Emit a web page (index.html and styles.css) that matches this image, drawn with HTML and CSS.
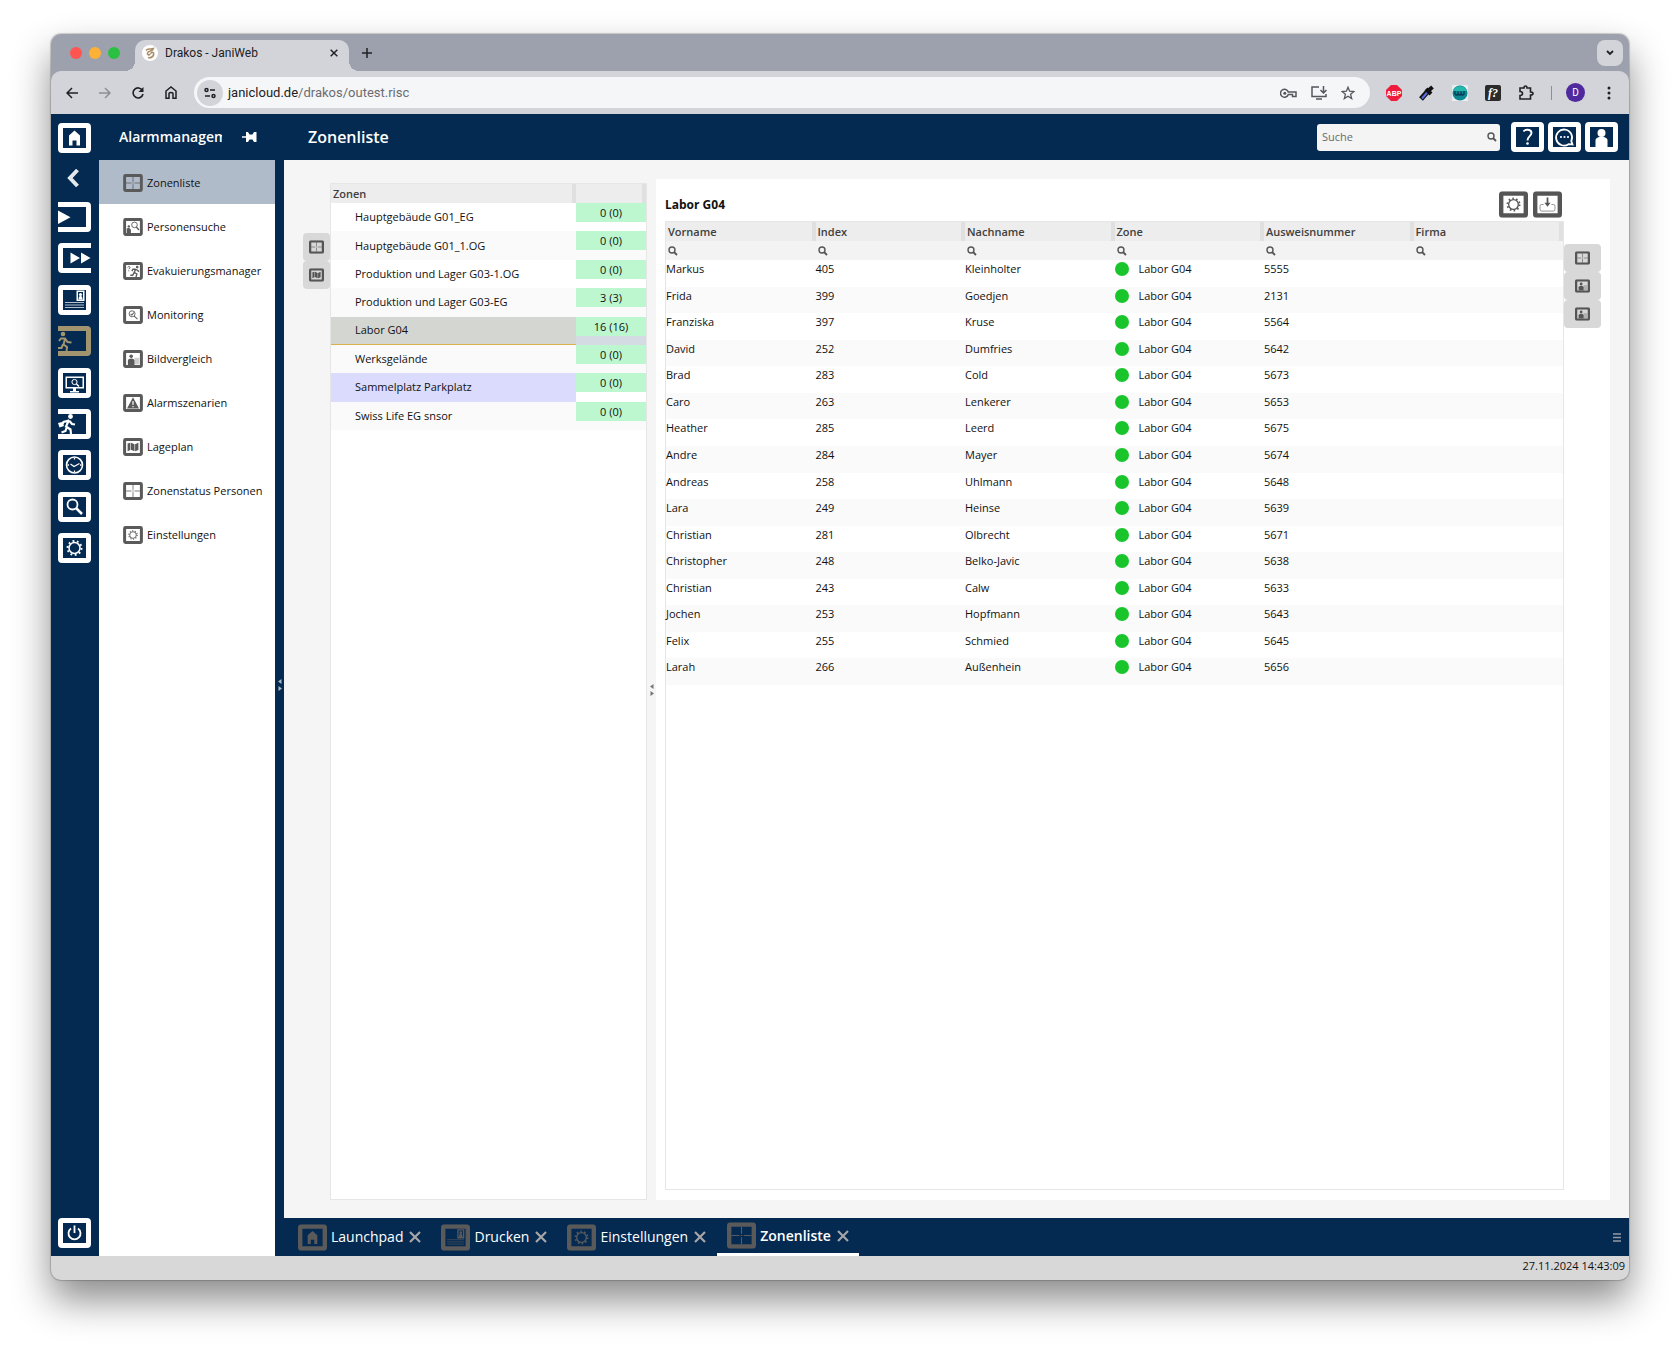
FILE: index.html
```html
<!DOCTYPE html>
<html lang="de">
<head>
<meta charset="utf-8">
<title>Drakos - JaniWeb</title>
<link rel="stylesheet" href="styles.css">
</head>
<body>
<svg class="sprite" aria-hidden="true">
  <symbol id="frame" viewBox="0 0 33 30"><path fill-rule="evenodd" d="M4 0H29a4 4 0 0 1 4 4V26a4 4 0 0 1-4 4H4a4 4 0 0 1-4-4V4a4 4 0 0 1 4-4ZM5 5V25H28V5Z"/></symbol>
  <symbol id="frame-right" viewBox="0 0 33 30"><path d="M0 0H29a4 4 0 0 1 4 4V26a4 4 0 0 1-4 4H0V25H28V5H0Z"/></symbol>
  <symbol id="home" viewBox="0 0 33 30"><use href="#frame"/><path d="M16.500 7.500 22 12.500V22.500H18.500V17.500H14.500V22.500H11V12.500Z"/></symbol>
  <symbol id="play" viewBox="0 0 33 30"><use href="#frame-right"/><path d="M0 8.500 12.500 15.200 0 22Z"/></symbol>
  <symbol id="forward" viewBox="0 0 33 30"><path d="M33 0H4a4 4 0 0 0-4 4V26a4 4 0 0 0 4 4H33V25H5V5H33Z"/><path d="M12.500 9.500 22 15 12.500 20.500ZM23 9.500 32.500 15 23 20.500Z"/></symbol>
  <symbol id="badge" viewBox="0 0 33 30"><use href="#frame"/><path fill-rule="evenodd" d="M18.500 5.500H26.500V16H18.500ZM20 7V14.500H25V7Z"/><circle cx="22.500" cy="9.500" r="1.600"/><path d="M20.500 14.500c0-5 4-5 4 0Z"/><path d="M7 17.500H26M7 20H26M7 22.500H26" stroke="currentColor" stroke-width="1" opacity=".7"/></symbol>
  <symbol id="escape" viewBox="0 0 33 30"><use href="#frame-right"/><circle cx="5" cy="8" r="2.300"/><path d="M1 15 3 12.500H7L9.500 16 13.500 16.500M7 13 5.500 18.500 9 21 8.500 25.500M5 18.500 3.500 22H0" fill="none" stroke="currentColor" stroke-width="2"/></symbol>
  <symbol id="monitor" viewBox="0 0 33 30"><use href="#frame"/><path fill-rule="evenodd" d="M7.500 8.500H26V20.500H7.500ZM9 10V19H24.500V10ZM15 20.500H18V23H21V24.500H12V23H15Z"/><circle cx="16.500" cy="14" r="2.600" fill="none" stroke="currentColor"/><path d="M18.500 16 21 18.500" stroke="currentColor" stroke-width="1.500"/></symbol>
  <symbol id="runner" viewBox="0 0 33 30"><use href="#frame-right"/><circle cx="12.500" cy="7.500" r="2.400"/><path d="M11 11 8 17.500 12.500 20.500 13 25M9 17.500 7.500 22 3.500 23.500M11 11.500 5.500 13 4 16M11.500 12 14 15 17 15.500" fill="none" stroke="currentColor" stroke-width="2.200"/><path d="M0 14 4 13 6 17 1.500 18.500Z"/></symbol>
  <symbol id="clock" viewBox="0 0 33 30"><use href="#frame"/><circle cx="16.500" cy="15" r="8" fill="none" stroke="currentColor" stroke-width="1.600"/><path d="M12.500 14 16 16.500 21.500 13.500M16.500 8V9.500M16.500 20.500V22M9.500 15H11M22 15H23.500" fill="none" stroke="currentColor" stroke-width="1.300"/></symbol>
  <symbol id="search" viewBox="0 0 33 30"><use href="#frame"/><circle cx="14.500" cy="12.500" r="5" fill="none" stroke="currentColor" stroke-width="1.800"/><path d="M18 16 24 22" stroke="currentColor" stroke-width="2.500"/></symbol>
  <symbol id="gear" viewBox="0 0 33 30"><use href="#frame"/><circle cx="16.500" cy="15" r="5.500" fill="none" stroke="currentColor" stroke-width="1.500"/><circle cx="16.500" cy="15" r="7" fill="none" stroke="currentColor" stroke-width="1.900" stroke-dasharray="1.800 2.598"/></symbol>
  <symbol id="power" viewBox="0 0 33 30"><use href="#frame"/><path d="M13 10.500A6 6 0 1 0 20 10.500M16.500 7.500V15" fill="none" stroke="currentColor" stroke-width="1.800"/></symbol>
  <symbol id="help" viewBox="0 0 33 30"><use href="#frame"/><path d="M12.500 9.500C14 7 20.500 7 20.500 11 20.500 14 16.500 14.500 16.500 18.500" fill="none" stroke="currentColor" stroke-width="1.900"/><circle cx="16.500" cy="21.500" r="1.300"/></symbol>
  <symbol id="chat" viewBox="0 0 33 30"><use href="#frame"/><path d="M20.500 22.200A8 8 0 1 1 23.300 19L24.500 22.500Z" fill="none" stroke="currentColor" stroke-width="1.800"/><circle cx="13" cy="15" r="1.100"/><circle cx="16.500" cy="15" r="1.100"/><circle cx="20" cy="15" r="1.100"/></symbol>
  <symbol id="user" viewBox="0 0 33 30"><use href="#frame"/><circle cx="16.500" cy="11" r="4"/><path d="M10.500 25V18.500C10.500 13.500 22.500 13.500 22.500 18.500V25Z"/></symbol>
  <symbol id="grid" viewBox="0 0 33 30"><use href="#frame"/><path d="M16.500 5V13M16.500 17V25M5 15H14M19 15H28M15.500 15H17.500" stroke="currentColor" stroke-width="1.300"/></symbol>
  <symbol id="person-search" viewBox="0 0 33 30"><use href="#frame"/><circle cx="19" cy="11.500" r="4.700" fill="none" stroke="currentColor" stroke-width="1.500"/><path d="M22 15 26.500 20" stroke="currentColor" stroke-width="2"/><circle cx="9.500" cy="14" r="2"/><path d="M6 25V18C7 16 12 16 13 20V25Z"/></symbol>
  <symbol id="evacuate" viewBox="0 0 33 30"><use href="#frame"/><circle cx="23.500" cy="8.500" r="2.200"/><path d="M7.500 9C8.500 6.500 12 7.500 11.500 9.500L9.500 12M9.500 14V15.500" fill="none" stroke="currentColor" stroke-width="1.600"/><path d="M21.500 11.500 18.500 17 23 20 21.500 25M18.500 17.500 16 22H12M21 12H16.500L14.500 15M22 12.500 26.500 16" fill="none" stroke="currentColor" stroke-width="2.300"/></symbol>
  <symbol id="monitoring" viewBox="0 0 33 30"><use href="#frame"/><circle cx="15" cy="13" r="5" fill="none" stroke="currentColor" stroke-width="1.500"/><path d="M18.500 17 24 22M12.500 13 14.500 15 18 11" fill="none" stroke="currentColor" stroke-width="1.700"/></symbol>
  <symbol id="compare" viewBox="0 0 33 30"><use href="#frame"/><circle cx="13.500" cy="10.500" r="3"/><path d="M8 25V18C8 13 19 13 19 18V25Z"/><path d="M19 13H27V24H19Z" opacity=".3"/></symbol>
  <symbol id="alarm" viewBox="0 0 33 30"><use href="#frame"/><path fill-rule="evenodd" d="M16.500 5.500 26.500 24H6.500ZM15.300 12 15.700 18.500H17.300L17.700 12ZM15.500 20V22H17.500V20Z"/></symbol>
  <symbol id="map" viewBox="0 0 33 30"><use href="#frame"/><path d="M7.500 9 12 8V20L7.500 22ZM13 8 19 10.500V22L13 19.500ZM20 10.500 25.500 8V20L20 22Z"/></symbol>
  <symbol id="download" viewBox="0 0 33 30"><use href="#frame"/><path d="M12 15H9.500Q8 15 8 17V20.500Q8 22.500 10 22.500H23Q25 22.500 25 20.500V17Q25 15 23.500 15H21" fill="none" stroke="currentColor" opacity=".7"/><path d="M15.500 7H17.500V13H20L16.500 17.500 13 13H15.500Z"/></symbol>
  <symbol id="lens" viewBox="0 0 10 10"><circle cx="4" cy="4" r="3" fill="none" stroke="currentColor" stroke-width="1.400"/><path d="M6 6 9 9" stroke="currentColor" stroke-width="1.800"/></symbol>
  <symbol id="cross" viewBox="0 0 12 12"><path d="M1 1 11 11M11 1 1 11" stroke="currentColor" stroke-width="2.200"/></symbol>
  <symbol id="split" viewBox="0 0 4 12"><path d="M3.500 0V5L0 2.500ZM.500 7V12L4 9.500Z"/></symbol>
</svg>

<div class="window">
  <div class="tabstrip">
    <div class="lights"><span class="light red"></span><span class="light amber"></span><span class="light green"></span></div>
    <div class="browser-tab">
      <svg class="favicon" viewBox="0 0 16 16"><circle cx="8" cy="8" r="8" fill="#fff"/><path d="M4 5.500C6 2.500 8 5 11.500 3.500 11 7 6.500 5 5.500 8 5 10 7 10.500 8 9M6 12.500C9 13.500 12.500 11 11.500 8 10.500 6.500 8.500 7.500 9 9" fill="none" stroke="#a98e68" stroke-width="1.600"/></svg>
      <span class="tab-name">Drakos - JaniWeb</span>
      <button class="plain" aria-label="Tab schließen"><svg width="8" height="8" viewBox="0 0 12 12"><use href="#cross"/></svg></button>
    </div>
    <button class="plain new-tab" aria-label="Neuer Tab"><svg width="10" height="10" viewBox="0 0 10 10"><path d="M5 0V10M0 5H10" stroke="currentColor" stroke-width="1.500"/></svg></button>
    <button class="plain tab-menu" aria-label="Tabs suchen"><svg width="8" height="6" viewBox="0 0 8 6"><path d="M1 1 4 4 7 1" fill="none" stroke="currentColor" stroke-width="1.800"/></svg></button>
  </div>

  <div class="toolbar">
    <button class="plain nav" aria-label="Zurück"><svg width="12" height="12" viewBox="0 0 12 12"><path d="M12 6H1M6 1 1 6 6 11" fill="none" stroke="currentColor" stroke-width="1.500"/></svg></button>
    <button class="plain nav dim" aria-label="Vorwärts"><svg width="12" height="12" viewBox="0 0 12 12"><path d="M0 6H11M6 1 11 6 6 11" fill="none" stroke="currentColor" stroke-width="1.500"/></svg></button>
    <button class="plain nav" aria-label="Neu laden"><svg width="12" height="12" viewBox="0 0 12 12"><path d="M10.500 3.500A5 5 0 1 0 11 7" fill="none" stroke="currentColor" stroke-width="1.600"/><path d="M11.500 0V5H6.500Z"/></svg></button>
    <button class="plain nav" aria-label="Startseite"><svg width="12" height="13" viewBox="0 0 12 13"><path d="M1 12.200V5L6 1 11 5V12.200H8V8Q8 6.500 6 6.500T4 8V12.200Z" fill="none" stroke="currentColor" stroke-width="1.500"/></svg></button>
    <div class="omnibox">
      <button class="plain site-info" aria-label="Website-Informationen"><svg width="12" height="12" viewBox="0 0 12 12"><g fill="none" stroke="currentColor" stroke-width="1.500"><circle cx="2.500" cy="3" r="1.500"/><path d="M6 3H11M1 9H6"/><circle cx="9.500" cy="9" r="1.500"/></g></svg></button>
      <span class="url">janicloud.de<span class="path">/drakos/outest.risc</span></span>
      <svg width="17" height="10" viewBox="0 0 17 10"><g fill="none" stroke="currentColor" stroke-width="1.500"><path d="M8.300 4H16V8.500H12.500V6.500H8.300A4 4 0 1 1 8.300 4Z"/></g><circle cx="4.800" cy="5.200" r="1.500"/></svg>
      <svg width="16" height="14" viewBox="0 0 16 14"><path d="M8 1H1V10.500H15V8M5 13H11M12.500 0V6.500M9.500 4 12.500 7 15.500 4" fill="none" stroke="currentColor" stroke-width="1.500"/></svg>
      <svg width="14" height="14" viewBox="0 0 14 14"><path d="M7 1.200 8.600 5.200 13 5.500 9.600 8.300 10.700 12.600 7 10.200 3.300 12.600 4.400 8.300 1 5.500 5.400 5.200Z" fill="none" stroke="currentColor" stroke-width="1.300"/></svg>
    </div>
    <div class="extensions">
      <svg width="16" height="16" viewBox="0 0 16 16"><path d="M5 0H11L16 5V11L11 16H5L0 11V5Z" fill="#ee1c3c"/><text x="8" y="10.500" class="abp">ABP</text></svg>
      <svg width="16" height="16" viewBox="0 0 16 16"><path d="M2 14 9 6" stroke="#111" stroke-width="5"/><path d="M3 13.500 9 6.500" stroke="#5a6ee0" stroke-width="2"/><path d="M7 4 12 9M9 6 13.500 2" stroke="#111" stroke-width="4"/></svg>
      <svg width="16" height="16" viewBox="0 0 16 16"><path d="M0 0H16V16H0Z" fill="#e8ecee"/><circle cx="8" cy="8" r="7.500" fill="#0c8690"/><path d="M1 6A7.500 7.500 0 0 1 15 6Z" fill="#25b8ad"/><path d="M3 6V9Q4.500 11 6 9V6.500M6 9Q7.500 11 9 9V6.500M9 9Q10.500 11 12 9V6" fill="none" stroke="#083a55" stroke-width="1.300"/></svg>
      <svg width="16" height="16" viewBox="0 0 16 16"><rect width="16" height="16" rx="2" fill="#2b2b2b"/><text x="8" y="12" class="fq">f?</text></svg>
      <svg width="16" height="16" viewBox="0 0 16 16"><path d="M2 3H6Q6 1 7.500 1T9 3H12.500V7Q15 7 15 8.500T12.500 10V14H2V10.500Q4.500 10.500 4.500 8.500T2 6.500Z" fill="none" stroke="#222" stroke-width="1.600"/></svg>
    </div>
    <span class="divider"></span>
    <button class="plain avatar" aria-label="Profil">D</button>
    <button class="plain more" aria-label="Menü"><svg width="4" height="14" viewBox="0 0 4 14"><circle cx="2" cy="2" r="1.500"/><circle cx="2" cy="7" r="1.500"/><circle cx="2" cy="12" r="1.500"/></svg></button>
  </div>

  <div class="app">
    <nav class="rail" aria-label="Module">
      <button class="plain" aria-label="Start"><svg class="icon"><use href="#home"/></svg></button>
      <button class="plain back" aria-label="Zurück"><svg width="12" height="20" viewBox="0 0 12 20"><path d="M10.500 2 3 10 10.500 18" fill="none" stroke="currentColor" stroke-width="4"/></svg></button>
      <div class="modules">
        <button class="plain" aria-label="Eingang"><svg class="icon"><use href="#play"/></svg></button>
        <button class="plain" aria-label="Durchgang"><svg class="icon"><use href="#forward"/></svg></button>
        <button class="plain" aria-label="Ausweise"><svg class="icon"><use href="#badge"/></svg></button>
        <button class="plain current" aria-label="Alarmmanagement"><svg class="icon"><use href="#escape"/></svg></button>
        <button class="plain" aria-label="Überwachung"><svg class="icon"><use href="#monitor"/></svg></button>
        <button class="plain" aria-label="Besucher"><svg class="icon"><use href="#runner"/></svg></button>
        <button class="plain" aria-label="Zeiten"><svg class="icon"><use href="#clock"/></svg></button>
        <button class="plain" aria-label="Suche"><svg class="icon"><use href="#search"/></svg></button>
        <button class="plain" aria-label="Einstellungen"><svg class="icon"><use href="#gear"/></svg></button>
      </div>
      <button class="plain power" aria-label="Abmelden"><svg class="icon"><use href="#power"/></svg></button>
    </nav>

    <aside class="sidebar">
      <div class="sidebar-head"><h2>Alarmmanagement</h2><button class="plain" aria-label="Anheften"><svg width="15" height="12" viewBox="0 0 15 12"><path d="M0 5.200H4V1H6L7.500 3.500H10.500L12 1H14.500V11H12L10.500 8.500H7.500L6 11H4V6.800H0Z"/></svg></button></div>
      <nav class="menu" aria-label="Alarmmanagement">
        <a href="#" class="active"><svg class="icon-s"><use href="#grid"/></svg>Zonenliste</a>
        <a href="#"><svg class="icon-s"><use href="#person-search"/></svg>Personensuche</a>
        <a href="#"><svg class="icon-s"><use href="#evacuate"/></svg>Evakuierungsmanager</a>
        <a href="#"><svg class="icon-s"><use href="#monitoring"/></svg>Monitoring</a>
        <a href="#"><svg class="icon-s"><use href="#compare"/></svg>Bildvergleich</a>
        <a href="#"><svg class="icon-s"><use href="#alarm"/></svg>Alarmszenarien</a>
        <a href="#"><svg class="icon-s"><use href="#map"/></svg>Lageplan</a>
        <a href="#"><svg class="icon-s"><use href="#grid"/></svg>Zonenstatus Personen</a>
        <a href="#"><svg class="icon-s"><use href="#gear"/></svg>Einstellungen</a>
      </nav>
    </aside>
    <div class="split dark"><svg width="4" height="12"><use href="#split"/></svg></div>

    <div class="main">
      <header class="header">
        <h1>Zonenliste</h1>
        <label class="search"><input type="text" placeholder="Suche" aria-label="Suche"><svg width="10" height="10"><use href="#lens"/></svg></label>
        <button class="plain" aria-label="Hilfe"><svg class="icon"><use href="#help"/></svg></button>
        <button class="plain" aria-label="Nachrichten"><svg class="icon"><use href="#chat"/></svg></button>
        <button class="plain" aria-label="Benutzer"><svg class="icon"><use href="#user"/></svg></button>
      </header>

      <div class="workspace">
        <div class="side-tabs left">
          <button class="plain" aria-label="Zonen"><svg class="icon-xs"><use href="#grid"/></svg></button>
          <button class="plain" aria-label="Lageplan"><svg class="icon-xs"><use href="#map"/></svg></button>
        </div>
        <section class="zones">
          <table class="zone-table">
            <thead><tr><th>Zonen</th><th class="count-col"></th></tr></thead>
            <tbody>
              <tr><td>Hauptgebäude G01_EG</td><td><div class="count">0 (0)</div></td></tr>
              <tr><td>Hauptgebäude G01_1.OG</td><td><div class="count">0 (0)</div></td></tr>
              <tr><td>Produktion und Lager G03-1.OG</td><td><div class="count">0 (0)</div></td></tr>
              <tr><td>Produktion und Lager G03-EG</td><td><div class="count">3 (3)</div></td></tr>
              <tr class="selected"><td>Labor G04</td><td><div class="count">16 (16)</div></td></tr>
              <tr><td>Werksgelände</td><td><div class="count">0 (0)</div></td></tr>
              <tr class="assembly"><td>Sammelplatz Parkplatz</td><td><div class="count">0 (0)</div></td></tr>
              <tr><td>Swiss Life EG snsor</td><td><div class="count">0 (0)</div></td></tr>
            </tbody>
          </table>
        </section>
        <div class="split"><svg width="4" height="12"><use href="#split"/></svg></div>

        <section class="detail">
          <div class="detail-main">
            <div class="detail-head">
              <h3>Labor G04</h3>
              <button class="plain" aria-label="Einstellungen"><svg class="icon-m"><use href="#gear"/></svg></button>
              <button class="plain" aria-label="Exportieren"><svg class="icon-m"><use href="#download"/></svg></button>
            </div>
            <div class="grid-box">
              <table class="person-table">
                <thead>
                  <tr class="names"><th>Vorname</th><th>Index</th><th>Nachname</th><th>Zone</th><th>Ausweisnummer</th><th>Firma</th></tr>
                  <tr class="filters">
                    <td><button class="plain" aria-label="Vorname filtern"><svg width="10" height="10"><use href="#lens"/></svg></button></td>
                    <td><button class="plain" aria-label="Index filtern"><svg width="10" height="10"><use href="#lens"/></svg></button></td>
                    <td><button class="plain" aria-label="Nachname filtern"><svg width="10" height="10"><use href="#lens"/></svg></button></td>
                    <td><button class="plain" aria-label="Zone filtern"><svg width="10" height="10"><use href="#lens"/></svg></button></td>
                    <td><button class="plain" aria-label="Ausweisnummer filtern"><svg width="10" height="10"><use href="#lens"/></svg></button></td>
                    <td><button class="plain" aria-label="Firma filtern"><svg width="10" height="10"><use href="#lens"/></svg></button></td>
                  </tr>
                </thead>
                <tbody>
                  <tr><td>Markus</td><td>405</td><td>Kleinholter</td><td><span class="dot"></span>Labor G04</td><td>5555</td><td></td></tr>
                  <tr><td>Frida</td><td>399</td><td>Goedjen</td><td><span class="dot"></span>Labor G04</td><td>2131</td><td></td></tr>
                  <tr><td>Franziska</td><td>397</td><td>Kruse</td><td><span class="dot"></span>Labor G04</td><td>5564</td><td></td></tr>
                  <tr><td>David</td><td>252</td><td>Dumfries</td><td><span class="dot"></span>Labor G04</td><td>5642</td><td></td></tr>
                  <tr><td>Brad</td><td>283</td><td>Cold</td><td><span class="dot"></span>Labor G04</td><td>5673</td><td></td></tr>
                  <tr><td>Caro</td><td>263</td><td>Lenkerer</td><td><span class="dot"></span>Labor G04</td><td>5653</td><td></td></tr>
                  <tr><td>Heather</td><td>285</td><td>Leerd</td><td><span class="dot"></span>Labor G04</td><td>5675</td><td></td></tr>
                  <tr><td>Andre</td><td>284</td><td>Mayer</td><td><span class="dot"></span>Labor G04</td><td>5674</td><td></td></tr>
                  <tr><td>Andreas</td><td>258</td><td>Uhlmann</td><td><span class="dot"></span>Labor G04</td><td>5648</td><td></td></tr>
                  <tr><td>Lara</td><td>249</td><td>Heinse</td><td><span class="dot"></span>Labor G04</td><td>5639</td><td></td></tr>
                  <tr><td>Christian</td><td>281</td><td>Olbrecht</td><td><span class="dot"></span>Labor G04</td><td>5671</td><td></td></tr>
                  <tr><td>Christopher</td><td>248</td><td>Belko-Javic</td><td><span class="dot"></span>Labor G04</td><td>5638</td><td></td></tr>
                  <tr><td>Christian</td><td>243</td><td>Calw</td><td><span class="dot"></span>Labor G04</td><td>5633</td><td></td></tr>
                  <tr><td>Jochen</td><td>253</td><td>Hopfmann</td><td><span class="dot"></span>Labor G04</td><td>5643</td><td></td></tr>
                  <tr><td>Felix</td><td>255</td><td>Schmied</td><td><span class="dot"></span>Labor G04</td><td>5645</td><td></td></tr>
                  <tr><td>Larah</td><td>266</td><td>Außenhein</td><td><span class="dot"></span>Labor G04</td><td>5656</td><td></td></tr>
                </tbody>
              </table>
            </div>
          </div>
          <div class="side-tabs right">
            <button class="plain" aria-label="Zonenstatus"><svg class="icon-xs"><use href="#grid"/></svg></button>
            <button class="plain" aria-label="Bildvergleich"><svg class="icon-xs"><use href="#compare"/></svg></button>
            <button class="plain" aria-label="Personenbild"><svg class="icon-xs"><use href="#compare"/></svg></button>
          </div>
        </section>
      </div>

      <div class="taskbar">
        <div class="task"><svg class="icon-m"><use href="#home"/></svg><a href="#">Launchpad</a><button class="plain" aria-label="Launchpad schließen"><svg width="12" height="12"><use href="#cross"/></svg></button></div>
        <div class="task"><svg class="icon-m"><use href="#badge"/></svg><a href="#">Drucken</a><button class="plain" aria-label="Drucken schließen"><svg width="12" height="12"><use href="#cross"/></svg></button></div>
        <div class="task"><svg class="icon-m"><use href="#gear"/></svg><a href="#">Einstellungen</a><button class="plain" aria-label="Einstellungen schließen"><svg width="12" height="12"><use href="#cross"/></svg></button></div>
        <div class="task active"><svg class="icon-m"><use href="#grid"/></svg><a href="#">Zonenliste</a><button class="plain" aria-label="Zonenliste schließen"><svg width="12" height="12"><use href="#cross"/></svg></button></div>
        <button class="plain task-menu" aria-label="Alle Fenster"><svg width="8" height="9" viewBox="0 0 8 9"><path d="M0 1H8M0 4.500H8M0 8H8" stroke="currentColor" stroke-width="1.500"/></svg></button>
      </div>
    </div>
  </div>
  <footer class="status">27.11.2024 14:43:09</footer>
</div>
</body>
</html>
```
FILE: styles.css
```css
* { box-sizing: border-box; }

body {
  margin: 0;
  min-height: 100vh;
  padding: 34px 51px 68px;
  display: flex;
  background: #fff;
  font: 11px/20px "Open Sans", sans-serif;
  color: #111;
}

h1, h2, h3 { margin: 0; font-weight: 600; }
a { color: inherit; text-decoration: none; }
svg { display: block; fill: currentColor; flex: none; }
.sprite { position: absolute; width: 0; height: 0; }

.plain {
  padding: 0;
  border: 0;
  background: none;
  color: inherit;
  font: inherit;
  display: flex;
  align-items: center;
  justify-content: center;
  flex: none;
}

.icon { width: 33px; height: 30px; }
.icon-m { width: 29px; height: 27px; }
.icon-s { width: 20px; height: 18px; }
.icon-xs { width: 15px; height: 14px; }

.window {
  flex: 1;
  min-width: 0;
  display: flex;
  flex-direction: column;
  border-radius: 10px;
  overflow: hidden;
  background: #9da1ad;
  box-shadow: 0 0 1px 1px rgba(0, 0, 0, .18), 0 20px 38px rgba(0, 0, 0, .46);
}

/* Browser frame */
.tabstrip {
  height: 37px;
  display: flex;
  align-items: center;
  padding: 0 6px 0 19px;
  color: #202124;
}
.lights { display: flex; gap: 7px; width: 65px; }
.light { width: 12px; height: 12px; border-radius: 50%; }
.red { background: #fe5550; }
.amber { background: #fdb235; }
.green { background: #2ac142; }
.browser-tab {
  position: relative;
  align-self: flex-end;
  width: 214px;
  height: 31px;
  padding: 0 11px 6px 7px;
  display: flex;
  align-items: center;
  gap: 7px;
  border-radius: 10px 10px 0 0;
  background: #d3d4da;
}
.browser-tab::before, .browser-tab::after {
  content: "";
  position: absolute;
  bottom: 0;
  width: 10px;
  height: 10px;
}
.browser-tab::before { left: -10px; background: radial-gradient(circle at 0 0, transparent 10px, #d3d4da 10px); }
.browser-tab::after { right: -10px; background: radial-gradient(circle at 100% 0, transparent 10px, #d3d4da 10px); }
.favicon { width: 16px; height: 16px; }
.tab-name { flex: 1; font: 12px/16px Roboto, sans-serif; }
.new-tab { margin-left: 13px; }
.tab-menu { margin-left: auto; width: 26px; height: 26px; border-radius: 8px; background: #d3d4da; }

.toolbar {
  height: 43px;
  padding: 0 14px 0 15px;
  display: flex;
  align-items: center;
  border-radius: 10px 10px 0 0;
  background: #d3d4da;
  color: #202124;
}
.nav { width: 12px; margin-right: 21px; }
.dim { color: #8d8f95; }
.omnibox {
  flex: 1;
  height: 31px;
  display: flex;
  align-items: center;
  gap: 14px;
  padding: 0 15px 0 3px;
  border-radius: 16px;
  background: #f5f6f8;
  color: #55575c;
  margin-left: -4px;
}
.site-info { width: 26px; height: 26px; border-radius: 50%; background: #d3d4da; color: #202124; }
.url { flex: 1; margin-left: -9px; font: 13px/20px Roboto, sans-serif; color: #202124; }
.path { color: #6a6c70; }
.extensions { display: flex; gap: 17px; margin-left: 16px; }
.abp { font: 700 7px "Liberation Sans", sans-serif; fill: #fff; text-anchor: middle; }
.fq { font: italic 700 12px "Liberation Serif", serif; fill: #fff; text-anchor: middle; }
.divider { width: 1px; height: 14px; margin: 0 14px 0 17px; background: #8b8e9c; }
.avatar { width: 19px; height: 19px; border-radius: 50%; background: #4e2a9e; color: #fff; font: 10px/19px Roboto, sans-serif; }
.more { margin: 0 4px 0 22px; }

/* Application */
.app { flex: 1; display: flex; background: #042a52; }

.rail {
  width: 48px;
  display: flex;
  flex-direction: column;
  align-items: center;
  padding: 9px 1px 8px 0;
  color: #fff;
}
.back { width: 33px; height: 49px; padding-right: 3px; color: #e4e7ec; }
.modules { height: 361px; display: flex; flex-direction: column; justify-content: space-between; }
.current { color: #a39470; }
.power { margin-top: auto; }

.sidebar { width: 176px; display: flex; flex-direction: column; background: #fff; }
.sidebar-head {
  height: 46px;
  padding: 0 18px 0 20px;
  display: flex;
  align-items: center;
  justify-content: space-between;
  background: #042a52;
  color: #fff;
}
.sidebar-head h2 { width: 103px; overflow: hidden; font-size: 14px; }
.menu a {
  height: 44px;
  padding: 2px 0 0 24px;
  display: flex;
  align-items: center;
  gap: 4px;
  white-space: nowrap;
}
.menu svg { color: #5a5a5a; }
.menu .active { background: #b0bbc9; }

.split { width: 9px; display: flex; align-items: center; justify-content: center; color: #777; }
.dark { color: #aeb6c0; }

.main { flex: 1; min-width: 0; display: flex; flex-direction: column; }
.header {
  height: 46px;
  padding: 0 11px 0 24px;
  display: flex;
  align-items: center;
  gap: 4px;
  color: #fff;
}
.header h1 { flex: 1; font-size: 16px; }
.search {
  width: 183px;
  height: 27px;
  margin-right: 7px;
  padding: 0 3px 0 5px;
  display: flex;
  align-items: center;
  border-radius: 3px;
  background: #f4f4f4;
  color: #555;
}
.search input { flex: 1; min-width: 0; padding: 0; border: 0; background: none; outline: 0; font: inherit; }
.search input::placeholder { color: #6a6a6a; }

.workspace { flex: 1; display: flex; padding: 19px 19px 18px; background: #f5f5f5; }

.side-tabs { color: #555; }
.side-tabs .plain { width: 100%; height: 28px; border-radius: 4px; background: #d8d8d8; }
.left { width: 27px; padding-top: 54px; }
.right { width: 37px; padding-top: 65px; }

.zones { width: 317px; margin-top: 4px; border: 1px solid #e6e6e6; background: #fff; }
table { width: 100%; border-collapse: separate; border-spacing: 0; table-layout: fixed; }
th, td { padding: 0; text-align: left; white-space: nowrap; }
th {
  height: 19px;
  padding-left: 2px;
  line-height: 19px;
  font-weight: 600;
  color: #404040;
  background: #ededed;
  border-right: 4px solid #e0e0e0;
}
tbody tr:nth-child(even) { background: #fafafa; }

.zone-table { height: 246px; }
.zone-table .count-col { width: 70px; }
.zone-table td { height: 28px; }
.zone-table td:first-child { padding-left: 24px; }
.zone-table td:last-child { vertical-align: top; }
.count { height: 19px; line-height: 19px; text-align: center; background: #bdf7cf; }
.zone-table .selected td:first-child { background: #d4d6d1; border-bottom: 1px solid #d9b04c; }
.zone-table .selected td:last-child { background: #d5dbe3; }
.zone-table .assembly td:first-child { background: #dbdbfd; }

.detail { flex: 1; min-width: 0; display: flex; padding: 0 9px 10px; background: #fff; }
.detail-main { flex: 1; min-width: 0; display: flex; flex-direction: column; }
.detail-head { height: 42px; padding: 9px 2px 0 0; display: flex; align-items: center; gap: 5px; color: #555; }
.detail-head h3 { flex: 1; font-size: 12px; font-weight: 700; color: #111; }
.grid-box { flex: 1; border: 1px solid #e6e6e6; }

.person-table { height: 463px; }
.person-table tbody td { height: 26px; line-height: 18px; vertical-align: top; }
.person-table .filters td { height: 19px; padding-left: 2px; background: #f3f3f3; color: #555; }
.filters .plain { height: 18px; }
.dot {
  display: inline-block;
  width: 14px;
  height: 14px;
  margin-right: 10px;
  border-radius: 50%;
  background: #19c52b;
  vertical-align: -3px;
}

.taskbar { height: 38px; display: flex; padding: 0 8px 0 0; color: #fff; }
.task {
  display: flex;
  align-items: center;
  padding: 0 6px 0 14px;
  font-size: 14px;
  border-bottom: 3px solid transparent;
  border-top: 3px solid transparent;
}
.task a { margin: 0 6px 0 4px; }
.task svg { color: #5a5a5a; }
.task button svg { color: #a6a6a6; }
.task.active { margin-left: 5px; padding: 0 10px; font-weight: 600; border-top: 0; border-bottom-color: #fff; }
.task-menu { margin-left: auto; color: #9299a2; }

.status { height: 24px; padding-right: 4px; line-height: 20px; text-align: right; background: #d8d8d8; }
```
